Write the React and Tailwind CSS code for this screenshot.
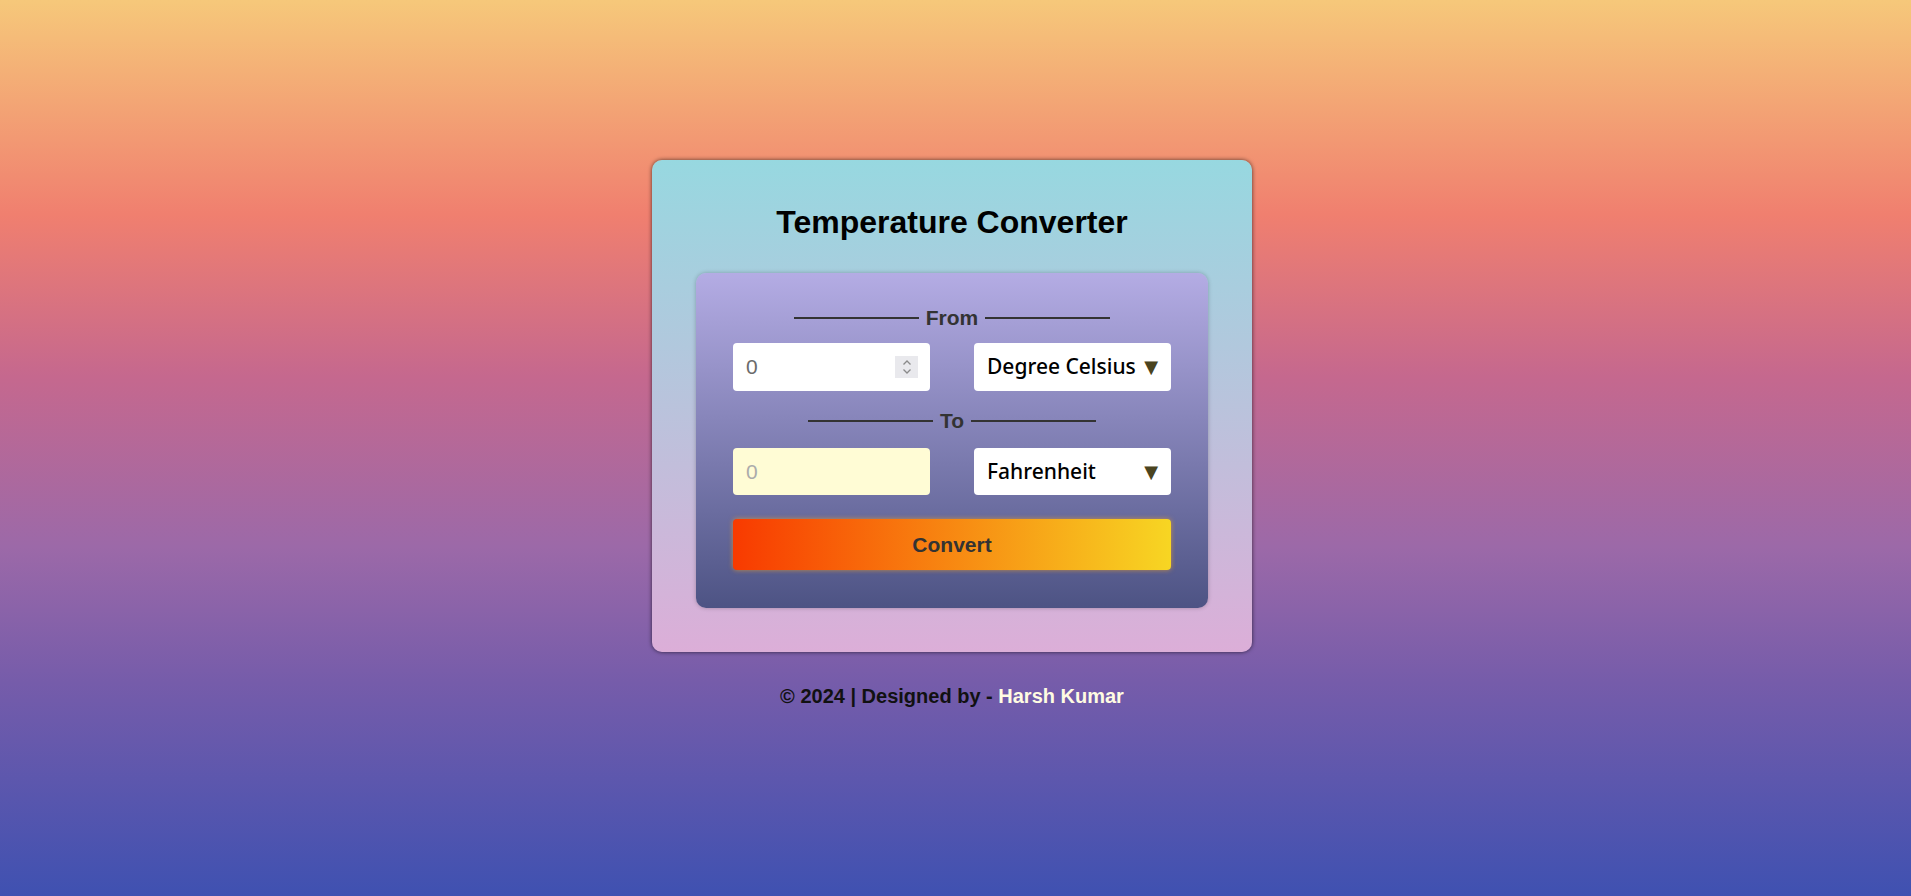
import React from "react";

function Divider({ label, w }) {
  return (
    <div className="flex items-center justify-center gap-[7px]">
      <div className={`h-[2px] bg-[#333] ${w}`} />
      <span className="text-[21px] font-bold leading-[24px] text-[#333]">{label}</span>
      <div className={`h-[2px] bg-[#333] ${w}`} />
    </div>
  );
}

function Select({ value, h }) {
  return (
    <div className={`relative w-[197px] rounded-[4px] bg-white ${h}`}>
      <div className="flex h-full items-center pl-[13px] text-[21px] font-medium text-black [font-family:'Noto_Sans',sans-serif]">
        {value}
      </div>
      <span className="absolute right-[13px] top-1/2 -translate-y-1/2 text-[18px] leading-none text-[#4a4420] [font-family:'DejaVu_Sans',sans-serif]">
        ▼
      </span>
    </div>
  );
}

export default function App() {
  return (
    <div className="flex min-h-screen flex-col items-center bg-[linear-gradient(to_bottom,#f6c87a_0%,#f07f6f_24%,#c5688e_42%,#9c69a8_61%,#765caa_76%,#3f51b1_100%)] pr-[7px] pt-[160px] [font-family:'Liberation_Sans',Arial,sans-serif]">
      <div className="flex w-[600px] flex-col items-center rounded-[10px] bg-[linear-gradient(to_bottom,#97d8e0,#dcaed8)] px-[44px] pb-[44px] pt-[44px] shadow-[0_0_4px_rgba(0,0,0,0.65)]">
        <h1 className="text-[32px] font-bold leading-[37px] text-black">Temperature Converter</h1>
        <div className="mt-[32px] flex w-[512px] flex-col rounded-[10px] bg-[linear-gradient(to_bottom,#b4ace4,#4d5384)] px-[37px] pb-[38px] pt-[33px] shadow-[0_0_4px_rgba(0,0,0,0.25)]">
          <Divider label="From" w="w-[125px]" />
          <div className="mt-[13px] flex justify-between">
            <div className="relative h-[48px] w-[197px] rounded-[4px] bg-white">
              <div className="flex h-full items-center pl-[13px] text-[21px] text-[#6b6b6b]">0</div>
              <div className="absolute right-[12px] top-[13px] flex h-[22px] w-[23px] flex-col items-center justify-center bg-[#e9e9ed]">
                <svg width="10" height="16" viewBox="0 0 10 16" fill="none" stroke="#8a8a8a" strokeWidth="1.3">
                  <path d="M1.5 5.5 L5 2 L8.5 5.5" />
                  <path d="M1.5 10.5 L5 14 L8.5 10.5" />
                </svg>
              </div>
            </div>
            <Select value="Degree Celsius" h="h-[48px]" />
          </div>
          <div className="mt-[18px]">
            <Divider label="To" w="w-[125px]" />
          </div>
          <div className="mt-[15px] flex justify-between">
            <div className="h-[47px] w-[197px] rounded-[4px] bg-[#fffcd5]">
              <div className="flex h-full items-center pl-[13px] text-[21px] text-[#ababab]">0</div>
            </div>
            <Select value="Fahrenheit" h="h-[47px]" />
          </div>
          <button className="mt-[24px] h-[51px] w-full rounded-[4px] bg-[linear-gradient(to_right,#f83a00,#f7d623)] text-[21px] font-bold text-[#333] shadow-[0_0_5px_rgba(240,160,40,0.7)]">
            Convert
          </button>
        </div>
      </div>
      <p className="mt-[33px] text-[20px] font-bold leading-[23px] text-[#111]">
        © 2024 | Designed by - <span className="text-[#fffbe2]">Harsh Kumar</span>
      </p>
    </div>
  );
}
